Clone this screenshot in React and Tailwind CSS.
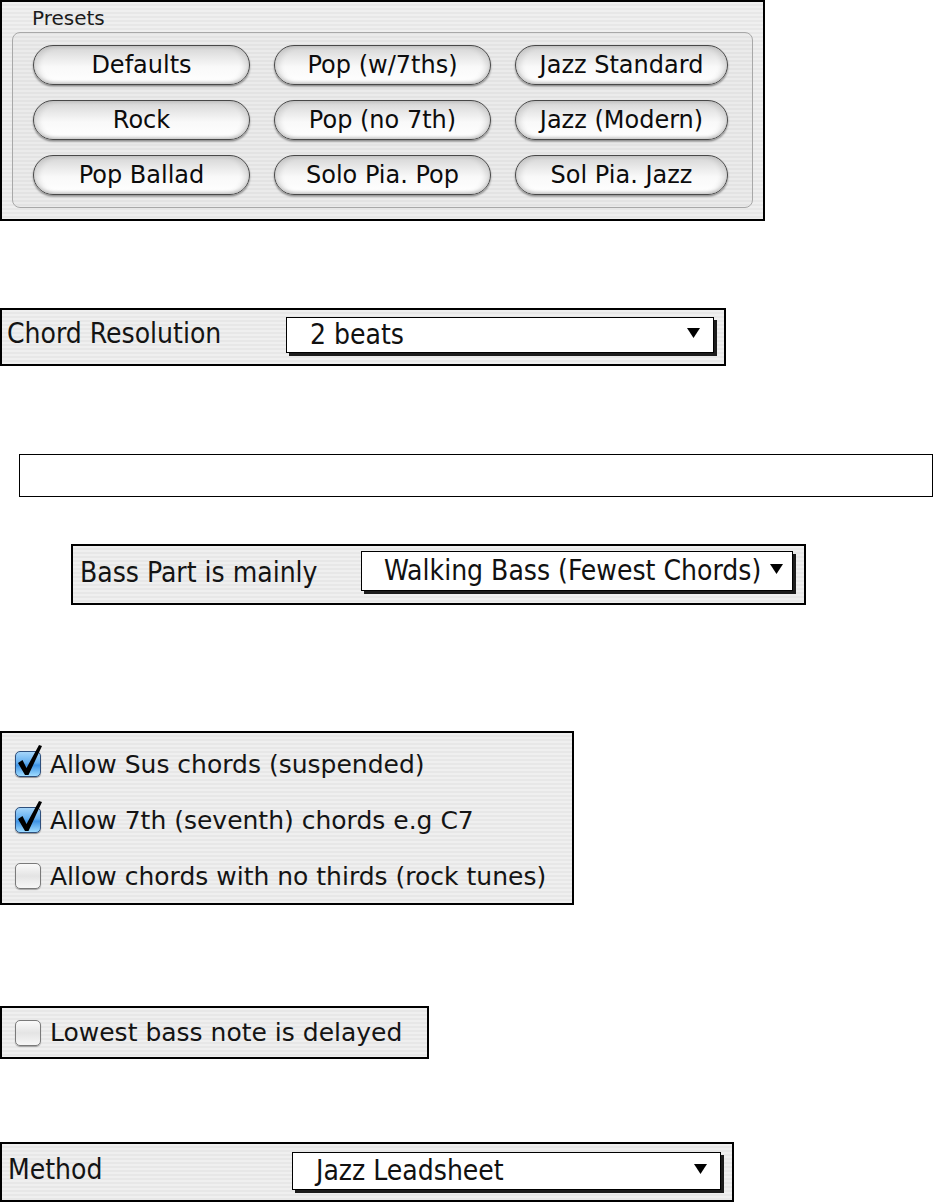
import React from "react";

const stripe =
  "bg-[repeating-linear-gradient(to_bottom,#efefef_0px,#efefef_2px,#e7e7e7_2px,#e7e7e7_4px)]";
const cond = "font-['DejaVu_Sans_Condensed','DejaVu_Sans',sans-serif] font-stretch-condensed";

function AquaButton({ children }) {
  return (
    <div className="h-[40px] rounded-full border-[1.5px] border-[#484848] bg-[linear-gradient(to_bottom,#d4d4d4_0%,#e9e9e9_30%,#f9f9f9_55%,#ffffff_100%)] shadow-[0_1.5px_2px_rgba(0,0,0,0.4),inset_0_-2px_3px_rgba(0,0,0,0.14),inset_5px_0_5px_rgba(0,0,0,0.09),inset_-5px_0_5px_rgba(0,0,0,0.09)] flex items-center justify-center text-[24px] leading-none text-[#0c0c0c]">
      {children}
    </div>
  );
}

function Arrow() {
  return (
    <svg width="13" height="10" viewBox="0 0 13 10" className="shrink-0">
      <polygon points="0,0 13,0 6.5,10" fill="#000" />
    </svg>
  );
}

function Dropdown({ text, w, h, mt, pl, pr }) {
  return (
    <div
      className={`${w} ${h} ${mt} bg-white border border-black shadow-[3px_3px_0_#1c1c1c] flex items-center justify-between ${pl} ${pr}`}
    >
      <span className={`${cond} text-[28px] leading-none text-[#111] whitespace-nowrap`}>{text}</span>
      <div className="mb-[5px]">
        <Arrow />
      </div>
    </div>
  );
}

function Checkbox({ checked }) {
  return (
    <div className="relative w-[26px] h-[26px] shrink-0">
      {checked ? (
        <div className="w-full h-full rounded-[5px] border border-[#2e4f7c] bg-[linear-gradient(to_bottom,#a6d6fa_0%,#62aef0_45%,#3e93e4_55%,#9fdcff_100%)] shadow-[0_1px_1px_rgba(0,0,0,0.4)]" />
      ) : (
        <div className="w-full h-full rounded-[5px] border border-[#7a7a7a] bg-[linear-gradient(to_bottom,#fafafa_0%,#e4e4e4_50%,#f7f7f7_100%)] shadow-[0_1px_1px_rgba(0,0,0,0.3)]" />
      )}
      {checked && (
        <svg
          className="absolute left-0 top-[-7px]"
          width="30"
          height="34"
          viewBox="0 0 30 34"
        >
          <polygon points="3,19 7.5,16 11.5,24 24,1 27,2 13.5,31 10,31" fill="#000" />
        </svg>
      )}
    </div>
  );
}

function CheckRow({ checked, label }) {
  return (
    <div className="h-[54px] flex items-center gap-[9px]">
      <Checkbox checked={checked} />
      <span className="text-[25px] leading-none text-[#141414] whitespace-nowrap">{label}</span>
    </div>
  );
}

export default function App() {
  const presets = [
    "Defaults",
    "Pop (w/7ths)",
    "Jazz Standard",
    "Rock",
    "Pop (no 7th)",
    "Jazz (Modern)",
    "Pop Ballad",
    "Solo Pia. Pop",
    "Sol Pia. Jazz",
  ];
  return (
    <div className="w-[935px] min-h-[1203px] bg-white font-['DejaVu_Sans',sans-serif] flex flex-col items-start">
      {/* Presets */}
      <div className={`w-[765px] h-[221px] border-2 border-black ${stripe}`}>
        <div className="pl-[30px] pt-[4px] text-[20px] leading-[24px] text-[#1c1c1c]">Presets</div>
        <div className="ml-[10px] mt-[2px] w-[741px] h-[176px] border border-[#a8a8a8] rounded-[8px] bg-black/[0.015] pl-[20px] pt-[12px] grid grid-cols-[217px_217px_213px] auto-rows-[40px] gap-x-[24px] gap-y-[15px] content-start">
          {presets.map((p) => (
            <AquaButton key={p}>{p}</AquaButton>
          ))}
        </div>
      </div>

      {/* Chord Resolution */}
      <div className={`mt-[87px] w-[726px] h-[58px] border-2 border-black ${stripe} flex items-start pl-[5px]`}>
        <div className={`w-[279px] mt-[9px] ${cond} text-[28px] leading-[30px] text-[#141414] whitespace-nowrap`}>
          Chord Resolution
        </div>
        <Dropdown text="2 beats" w="w-[428px]" h="h-[36px]" mt="mt-[7px]" pl="pl-[23px]" pr="pr-[13px]" />
      </div>

      {/* Empty box */}
      <div className="mt-[88px] ml-[19px] w-[914px] h-[43px] border border-black bg-white" />

      {/* Bass Part */}
      <div className={`mt-[47px] ml-[71px] w-[735px] h-[61px] border-2 border-black ${stripe} flex items-start pl-[7px]`}>
        <div className={`w-[281px] mt-[12px] ${cond} text-[28px] leading-[30px] text-[#141414] whitespace-nowrap`}>
          Bass Part is mainly
        </div>
        <Dropdown
          text="Walking Bass (Fewest Chords)"
          w="w-[432px]"
          h="h-[40px]"
          mt="mt-[5px]"
          pl="pl-[22px]"
          pr="pr-[9px]"
        />
      </div>

      {/* Checkboxes */}
      <div className={`mt-[126px] w-[574px] h-[174px] border-2 border-black ${stripe} pl-[13px] pt-[4px] flex flex-col gap-[2px]`}>
        <CheckRow checked label="Allow Sus chords (suspended)" />
        <CheckRow checked label="Allow 7th (seventh) chords e.g C7" />
        <CheckRow checked={false} label="Allow chords with no thirds (rock tunes)" />
      </div>

      {/* Lowest bass */}
      <div className={`mt-[101px] w-[429px] h-[53px] border-2 border-black ${stripe} pl-[13px] flex items-center`}>
        <div className="flex items-center gap-[9px]">
          <Checkbox checked={false} />
          <span className="text-[25px] leading-none text-[#141414] whitespace-nowrap">Lowest bass note is delayed</span>
        </div>
      </div>

      {/* Method */}
      <div className={`mt-[83px] w-[734px] h-[60px] border-2 border-black ${stripe} flex items-start pl-[6px]`}>
        <div className={`w-[284px] mt-[11px] ${cond} text-[28px] leading-[30px] text-[#141414] whitespace-nowrap`}>
          Method
        </div>
        <Dropdown text="Jazz Leadsheet" w="w-[429px]" h="h-[38px]" mt="mt-[8px]" pl="pl-[23px]" pr="pr-[13px]" />
      </div>
    </div>
  );
}
